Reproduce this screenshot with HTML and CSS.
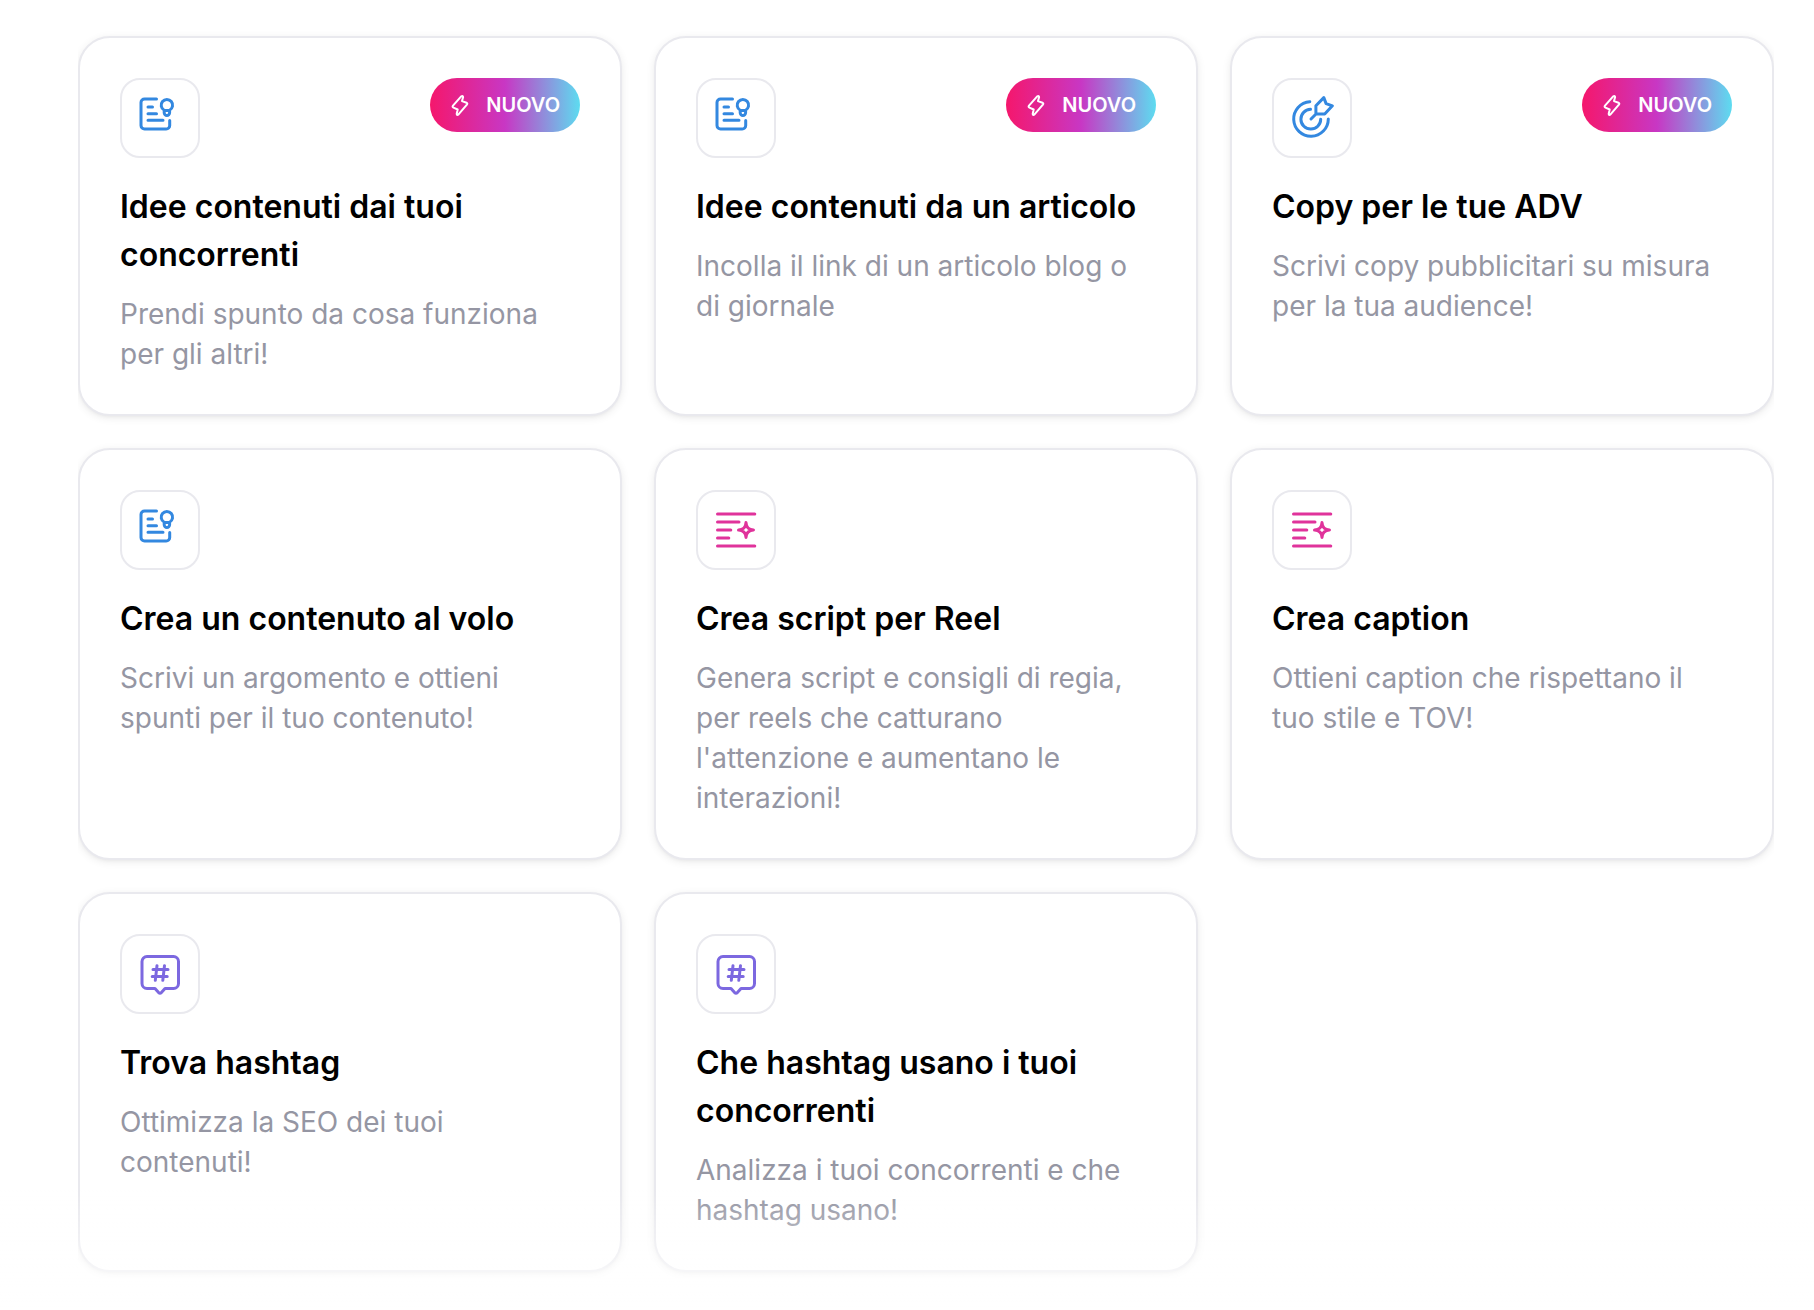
FILE: index.html
```html
<!DOCTYPE html>
<html lang="it">
<head>
<meta charset="utf-8">
<meta name="viewport" content="width=device-width, initial-scale=1">
<title>Strumenti</title>
<link rel="stylesheet" href="styles.css">
</head>
<body>
<svg class="sprite" aria-hidden="true">
  <symbol id="icon-idea" viewBox="0 0 48 48">
    <path d="M20.500 5H8.500A3.500 3.500 0 0 0 5 8.500v23A3.500 3.500 0 0 0 8.500 35h21.700a3.500 3.500 0 0 0 3.500-3.500v-5"/>
    <path d="M12 13h4.500M12 19.700h8.500M12 26.300h15"/>
    <path d="M28.200 16.200a5.700 5.700 0 1 1 5.400 0v2.600a2.700 2.700 0 0 1-5.400 0zM28.200 16.600h5.400"/>
  </symbol>
  <symbol id="icon-target" viewBox="0 0 48 48">
    <path d="M21.800 7.700A17.300 17.300 0 1 0 40.300 25"/>
    <path d="M22.500 15.300A9.900 9.900 0 1 0 32.700 25.300"/>
    <path d="M23 25l5-5M27.900 20v-8.200l7.900-8.200 2.300 6 6.300 2.200-7.700 8.200z"/>
  </symbol>
  <symbol id="icon-text" viewBox="0 0 48 48">
    <path d="M5.500 8h37.300M5.500 16h21.500M5.500 24h13.300M5.500 32h11.300M5.500 40h37.300"/>
    <path d="M34 16.500c.2 4.600 2.900 7.300 7.500 7.500-4.600.2-7.300 2.900-7.500 7.500-.2-4.600-2.900-7.300-7.500-7.500 4.600-.2 7.300-2.900 7.500-7.500z"/>
  </symbol>
  <symbol id="icon-hash" viewBox="0 0 48 48">
    <path d="M11 6.500h26.500a5 5 0 0 1 5 5v22a5 5 0 0 1-5 5H29l-3.800 4.200a1.600 1.600 0 0 1-2.400 0L19 38.500h-8a5 5 0 0 1-5-5v-22a5 5 0 0 1 5-5z"/>
    <path d="M21 15.700l-1.700 14.600M28.500 15.700l-1.700 14.600M17 19.500h15M16.200 26.500h15"/>
  </symbol>
  <symbol id="icon-bolt" viewBox="0 0 20 24">
    <path d="M11.200 3.300L3 12.700q-1 1.300.4 1.900l4.300 1.900-1 4.300q0 1.700 1.600.9L16.900 11.600q1-1.300-.4-1.900L12 8.100l1.100-3.900q0-1.700-1.900-.9z"/>
  </symbol>
</svg>

<main class="page">
  <ul class="tools">
    <li>
      <a class="card" href="#idee-concorrenti">
        <span class="card-top">
          <span class="tile blue"><svg><use href="#icon-idea"/></svg></span>
          <span class="badge"><svg><use href="#icon-bolt"/></svg>NUOVO</span>
        </span>
        <h2>Idee contenuti dai tuoi concorrenti</h2>
        <p>Prendi spunto da cosa funziona per gli altri!</p>
      </a>
    </li>
    <li>
      <a class="card" href="#idee-articolo">
        <span class="card-top">
          <span class="tile blue"><svg><use href="#icon-idea"/></svg></span>
          <span class="badge"><svg><use href="#icon-bolt"/></svg>NUOVO</span>
        </span>
        <h2>Idee contenuti da un articolo</h2>
        <p>Incolla il link di un articolo blog o di giornale</p>
      </a>
    </li>
    <li>
      <a class="card" href="#copy-adv">
        <span class="card-top">
          <span class="tile blue"><svg><use href="#icon-target"/></svg></span>
          <span class="badge"><svg><use href="#icon-bolt"/></svg>NUOVO</span>
        </span>
        <h2>Copy per le tue ADV</h2>
        <p>Scrivi copy pubblicitari su misura per la tua audience!</p>
      </a>
    </li>
    <li>
      <a class="card" href="#contenuto-al-volo">
        <span class="card-top">
          <span class="tile blue"><svg><use href="#icon-idea"/></svg></span>
        </span>
        <h2>Crea un contenuto al volo</h2>
        <p>Scrivi un argomento e ottieni spunti per il tuo contenuto!</p>
      </a>
    </li>
    <li>
      <a class="card" href="#script-reel">
        <span class="card-top">
          <span class="tile pink"><svg><use href="#icon-text"/></svg></span>
        </span>
        <h2>Crea script per Reel</h2>
        <p>Genera script e consigli di regia, per reels che catturano l'attenzione e aumentano le interazioni!</p>
      </a>
    </li>
    <li>
      <a class="card" href="#caption">
        <span class="card-top">
          <span class="tile pink"><svg><use href="#icon-text"/></svg></span>
        </span>
        <h2>Crea caption</h2>
        <p>Ottieni caption che rispettano il tuo stile e TOV!</p>
      </a>
    </li>
    <li>
      <a class="card" href="#trova-hashtag">
        <span class="card-top">
          <span class="tile purple"><svg><use href="#icon-hash"/></svg></span>
        </span>
        <h2>Trova hashtag</h2>
        <p>Ottimizza la SEO dei tuoi contenuti!</p>
      </a>
    </li>
    <li>
      <a class="card" href="#hashtag-concorrenti">
        <span class="card-top">
          <span class="tile purple"><svg><use href="#icon-hash"/></svg></span>
        </span>
        <h2>Che hashtag usano i tuoi concorrenti</h2>
        <p>Analizza i tuoi concorrenti e che hashtag usano!</p>
      </a>
    </li>
  </ul>
</main>
<div class="fade"></div>
</body>
</html>
```

FILE: styles.css
```css
* {
  box-sizing: border-box;
}

body {
  margin: 0;
  background: #fff;
  color: #000;
  font-family: Inter, "Liberation Sans", sans-serif;
}

.sprite {
  display: none;
}

.page {
  padding: 36px 40px 38px 78px;
}

.tools {
  display: grid;
  grid-template-columns: repeat(3, minmax(0, 1fr));
  gap: 32px;
  margin: 0;
  padding: 0;
  list-style: none;
  overflow-x: clip;
}

.card {
  display: flex;
  flex-direction: column;
  height: 100%;
  padding: 40px;
  border: 2px solid #e9e9ee;
  border-radius: 32px;
  background: #fff;
  box-shadow: 0 2px 8px rgba(0, 0, 0, 0.08), 0 2px 4px -2px rgba(0, 0, 0, 0.06);
  color: inherit;
  text-decoration: none;
}

.card-top {
  display: flex;
  justify-content: space-between;
  align-items: flex-start;
  margin-bottom: 25px;
}

.tile {
  display: flex;
  align-items: center;
  justify-content: center;
  width: 80px;
  height: 80px;
  border: 2px solid #e9e9ee;
  border-radius: 20px;
}

.tile svg {
  width: 48px;
  height: 48px;
}

svg {
  fill: none;
  stroke: currentColor;
  stroke-width: 3px;
  stroke-linecap: round;
  stroke-linejoin: round;
}

.blue {
  color: #3388e0;
}

.pink {
  color: #e0339b;
}

.purple {
  color: #7c68e0;
}

.badge {
  display: flex;
  align-items: center;
  gap: 16px;
  height: 54px;
  padding: 0 20px;
  border-radius: 27px;
  background: linear-gradient(90deg, #f5176c 0%, #c837c4 50%, #5ddcf0 100%);
  color: #fff;
  font-size: 20px;
  line-height: 28px;
  font-weight: 600;
}

.badge svg {
  width: 20px;
  height: 24px;
  stroke-width: 2px;
}

h2 {
  margin: 0 0 15px;
  font-size: 32px;
  line-height: 48px;
  font-weight: 600;
}

p {
  margin: 0;
  color: #9596a3;
  font-size: 28px;
  line-height: 40px;
}

/* Soft fade where the list runs past the bottom of the window */
.fade {
  position: fixed;
  right: 0;
  bottom: 0;
  left: 0;
  height: 120px;
  background: linear-gradient(rgba(255, 255, 255, 0), rgba(255, 255, 255, 0.5) 60%, #fff);
  pointer-events: none;
}
```
